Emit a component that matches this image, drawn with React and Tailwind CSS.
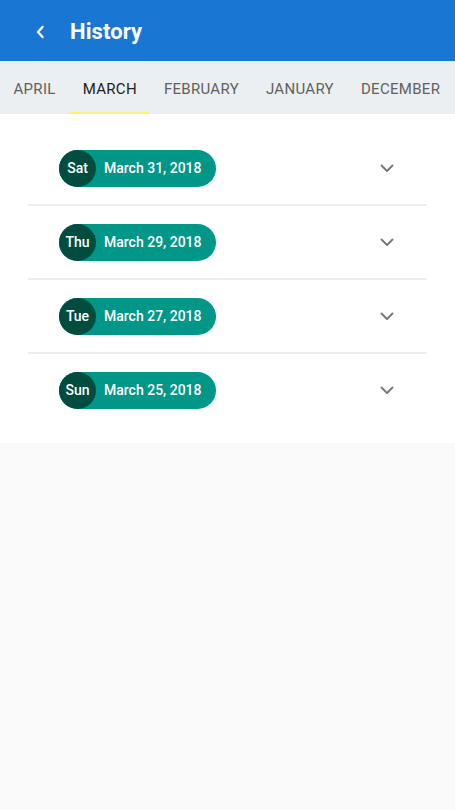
import React, { useState } from 'react';

const tabs = ['April', 'March', 'February', 'January', 'December'];

const days = [
  { day: 'Sat', date: 'March 31, 2018' },
  { day: 'Thu', date: 'March 29, 2018' },
  { day: 'Tue', date: 'March 27, 2018' },
  { day: 'Sun', date: 'March 25, 2018' },
];

const ChevronDown = () => (
  <svg width="14" height="9" viewBox="0 0 14 9" fill="none">
    <path d="M1.5 1.5L7 7L12.5 1.5" stroke="#757575" strokeWidth="1.8" strokeLinecap="round" strokeLinejoin="round" />
  </svg>
);

const App = () => {
  const [active, setActive] = useState('March');

  return (
    <div className="min-h-[810px] bg-[#fafafa] font-['Roboto',sans-serif]">
      {/* header */}
      <div className="h-[61px] bg-[#1976d2] flex items-center pt-[2px]">
        <button className="w-[24px] ml-[28px] flex items-center justify-center">
          <svg width="10" height="14" viewBox="0 0 10 14" fill="none">
            <path d="M7.5 2L3 7L7.5 12" stroke="white" strokeWidth="2.4" strokeLinecap="round" strokeLinejoin="round" />
          </svg>
        </button>
        <h1 className="ml-[18px] text-white text-[22px] font-bold tracking-[0.1px]">History</h1>
      </div>

      {/* month tabs */}
      <div className="h-[53px] bg-[#eceff1] flex overflow-hidden">
        {tabs.map((t) => (
          <button
            key={t}
            onClick={() => setActive(t)}
            className={
              'relative shrink-0 px-[13.5px] h-full flex items-center pt-[4px] uppercase text-[15px] tracking-[0.3px] ' +
              (active === t ? 'text-[#212121]' : 'text-[#616161]')
            }
          >
            {t}
            {active === t && (
              <span className="absolute left-0 right-0 bottom-0 h-[2px] bg-[#fff176]" />
            )}
          </button>
        ))}
      </div>

      {/* list */}
      <div className="bg-white px-[28px] pt-[18px] pb-[17px]">
        {days.map((d, i) => (
          <div key={d.date}>
            {i > 0 && <div className="h-[2px] bg-[#eeeeee]" />}
            <div className="h-[72px] flex items-center justify-between pl-[31px] pr-[33px]">
              <div className="h-[37px] w-[157px] rounded-full bg-[#009688] flex items-center">
                <div className="h-[37px] w-[37px] rounded-full bg-[#004d40] flex items-center justify-center text-white text-[14px] font-medium">
                  {d.day}
                </div>
                <span className="ml-[8px] text-white text-[14px] font-medium">{d.date}</span>
              </div>
              <ChevronDown />
            </div>
          </div>
        ))}
      </div>
    </div>
  );
};

export default App;
